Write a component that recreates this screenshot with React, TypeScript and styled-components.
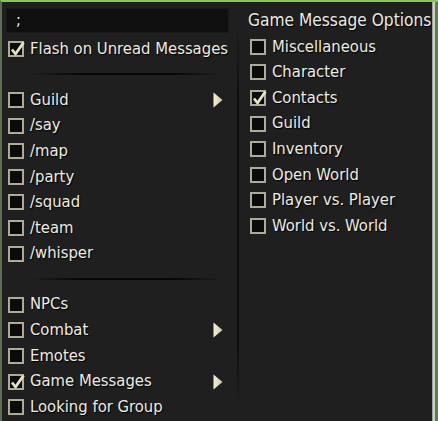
import React, { FC } from "react";
import styled, { createGlobalStyle } from "styled-components";

const GlobalStyle = createGlobalStyle`
  html, body {
    margin: 0;
    padding: 0;
    background: #3f7f2c;
  }
`;

const Window = styled.div`
  width: 438px;
  height: 421px;
  box-sizing: border-box;
  display: flex;
  border-top: 2px solid #86c95a;
  border-left: 2px solid #5d6e55;
  background: #1f1f1f;
  font-family: "DejaVu Sans Condensed", "DejaVu Sans", sans-serif;
  font-stretch: condensed;
  font-size: 16.5px;
  color: #ecebe2;
  overflow: hidden;
`;

const LeftPane = styled.div`
  width: 235px;
  padding: 6px 14px 0 6px;
  box-sizing: border-box;
  display: flex;
  flex-direction: column;
`;

const Separator = styled.div`
  width: 2px;
  background: linear-gradient(
    to bottom,
    #1f1f1f 5%,
    #0c0c0c 25%,
    #0c0c0c 80%,
    #1f1f1f 96%
  );
`;

const RightPane = styled.div`
  width: 193px;
  padding: 5px 0 0 11px;
  box-sizing: border-box;
  display: flex;
  flex-direction: column;
`;

const RightEdge = styled.div`
  width: 6px;
  background: linear-gradient(to right, #6b6b6b 0, #d4d4d4 1px, #c9c9c9 3px, #4f8a3a 3px);
`;

const ChatInput = styled.div`
  height: 25px;
  margin: 0 0 3px -2px;
  width: 223px;
  box-sizing: border-box;
  background: #0f0f0f;
  border: 1px solid #191919;
  padding-left: 9px;
  line-height: 22px;
  text-shadow: 1px 1px 0 #000;
`;

const Title = styled.div`
  height: 27px;
  line-height: 26px;
  margin-left: -2px;
  font-size: 17.2px;
  text-shadow: 1px 1px 1px #000;
  white-space: nowrap;
`;

const Row = styled.div`
  height: 25.6px;
  display: flex;
  align-items: center;
  gap: 6px;
  white-space: nowrap;
`;

const Label = styled.span`
  flex: 1;
  text-shadow: 1px 1px 1px #000;
  line-height: 1;
`;

const Box = styled.span`
  width: 16px;
  height: 16px;
  box-sizing: border-box;
  border: 2px solid #aeab9b;
  background: #0b0b0b;
  position: relative;
  flex: none;
`;

const Tick = styled.svg`
  position: absolute;
  left: -1px;
  top: -3px;
  width: 17px;
  height: 17px;
`;

const Arrow = styled.svg`
  width: 10px;
  height: 16px;
  flex: none;
`;

const Divider = styled.div`
  height: 25.6px;
  display: flex;
  align-items: center;
  padding: 0 2px 0 22px;

  &::after {
    content: "";
    flex: 1;
    height: 2px;
    background: linear-gradient(
      to right,
      rgba(0, 0, 0, 0),
      #070707 25%,
      #070707 75%,
      rgba(0, 0, 0, 0)
    );
  }
`;

interface CheckProps {
  label: string;
  checked?: boolean;
  sub?: boolean;
}

const Check: FC<CheckProps> = ({ label, checked, sub }) => (
  <Row>
    <Box>
      {checked && (
        <Tick viewBox="0 0 17 17">
          <path
            d="M3 9.5 L6.5 14 L14.5 2.5"
            fill="none"
            stroke="#e6e2c6"
            strokeWidth="2.8"
            strokeLinejoin="round"
          />
        </Tick>
      )}
    </Box>
    <Label>{label}</Label>
    {sub && (
      <Arrow viewBox="0 0 10 16">
        <defs>
          <linearGradient id="arw" x1="0" y1="0" x2="1" y2="0">
            <stop offset="0" stopColor="#f3f0d8" />
            <stop offset="1" stopColor="#cdc8a6" />
          </linearGradient>
        </defs>
        <path d="M0.5 0.5 L9.5 8 L0.5 15.5 Z" fill="url(#arw)" />
      </Arrow>
    )}
  </Row>
);

const channels = ["Guild", "/say", "/map", "/party", "/squad", "/team", "/whisper"];

const others: CheckProps[] = [
  { label: "NPCs" },
  { label: "Combat", sub: true },
  { label: "Emotes" },
  { label: "Game Messages", checked: true, sub: true },
  { label: "Looking for Group" },
];

const gameOptions: CheckProps[] = [
  { label: "Miscellaneous" },
  { label: "Character" },
  { label: "Contacts", checked: true },
  { label: "Guild" },
  { label: "Inventory" },
  { label: "Open World" },
  { label: "Player vs. Player" },
  { label: "World vs. World" },
];

export default function App() {
  return (
    <>
      <GlobalStyle />
      <Window>
        <LeftPane>
          <ChatInput>;</ChatInput>
          <Check label="Flash on Unread Messages" checked />
          <Divider />
          {channels.map((c, i) => (
            <Check key={c} label={c} sub={i === 0} />
          ))}
          <Divider />
          {others.map((o) => (
            <Check key={o.label} {...o} />
          ))}
        </LeftPane>
        <Separator />
        <RightPane>
          <Title>Game Message Options</Title>
          {gameOptions.map((o) => (
            <Check key={o.label} {...o} />
          ))}
        </RightPane>
        <RightEdge />
      </Window>
    </>
  );
}
